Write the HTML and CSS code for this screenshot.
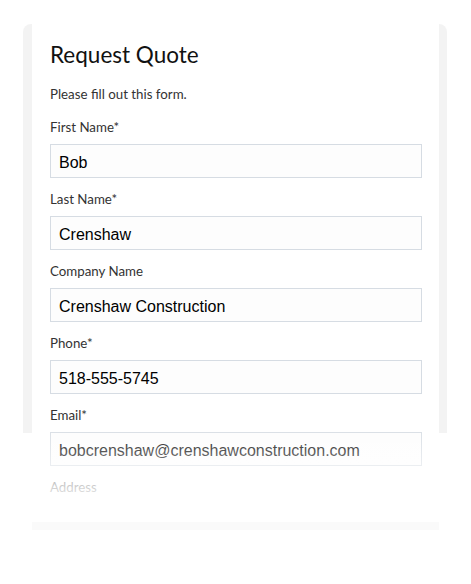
FILE: index.html
```html
<!DOCTYPE html>
<html lang="en">
<head>
<meta charset="UTF-8">
<meta name="viewport" content="width=device-width, initial-scale=1.0">
<title>Request Quote</title>
<link rel="stylesheet" href="styles.css">
</head>
<body>
<div class="stage">
  <div class="card">
    <div class="panel">
      <h1>Request Quote</h1>
      <p class="intro">Please fill out this form.</p>
      <form class="quote-form" onsubmit="return false;">
        <label>First Name*</label>
        <input type="text" value="Bob">
        <label>Last Name*</label>
        <input type="text" value="Crenshaw">
        <label>Company Name</label>
        <input type="text" value="Crenshaw Construction">
        <label>Phone*</label>
        <input type="text" value="518-555-5745">
        <label>Email*</label>
        <input type="text" value="bobcrenshaw@crenshawconstruction.com">
        <label>Address</label>
      </form>
      <div class="fade"></div>
    </div>
  </div>
</div>
</body>
</html>
```

FILE: styles.css
```css
  body {
    margin: 0;
    padding: 0;
    background: #fff;
    font-family: Lato, "Open Sans", sans-serif;
    color: #333;
  }
  .stage {
    padding: 24px 24px 0 23px;
  }
  .card {
    padding: 0 8px 0 9px;
    border-radius: 8px 8px 0 0;
    background: linear-gradient(#f3f3f3, #f3f3f3) top / 100% 409px no-repeat;
  }
  .panel {
    position: relative;
    height: 498px;
    padding: 0 17px 0 18px;
    background: #fff;
    border-bottom: 8px solid #fafafa;
    overflow: hidden;
  }
  h1 {
    margin: 0;
    padding-top: 17px;
    font-size: 22.5px;
    font-weight: normal;
    line-height: 28px;
    color: #111;
  }
  .intro {
    margin: 17px 0 0;
    font-size: 13.3px;
    line-height: 17px;
  }
  .quote-form {
    display: flex;
    flex-direction: column;
  }
  label {
    margin-top: 13px;
    font-size: 13.3px;
    line-height: 16px;
  }
  label:first-child {
    margin-top: 16px;
  }
  input[type="text"] {
    margin-top: 9px;
    height: 34px;
    padding: 3px 8px 0;
    border: 1px solid #d6dce3;
    border-radius: 0;
    background: #fdfdfd;
    box-sizing: border-box;
    font-family: "Liberation Sans", Arial, sans-serif;
    font-size: 16px;
    color: #000;
  }
  .fade {
    position: absolute;
    left: 0;
    right: 0;
    bottom: 0;
    height: 100px;
    background: linear-gradient(rgba(255, 255, 255, 0), #fff 85%);
  }
```
